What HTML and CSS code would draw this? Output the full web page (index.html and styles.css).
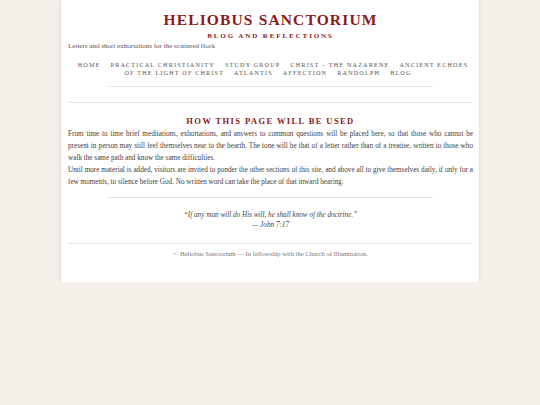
FILE: index.html
```html
<!DOCTYPE html>
<html>
<head>
<meta charset="utf-8">
<link rel="stylesheet" href="styles.css">
</head>
<body>
<div class="page">
  <header class="header">
    <h1 class="title">HELIOBUS SANCTORIUM</h1>
    <div class="subtitle">BLOG AND REFLECTIONS</div>
    <div class="tagline">Letters and short exhortations for the scattered flock</div>
    <nav class="nav">
      <a>HOME</a><a>PRACTICAL CHRISTIANITY</a><a>STUDY GROUP</a><a>CHRIST – THE NAZARENE</a><a><span>ANCIENT ECHOES</span> <span>OF THE LIGHT OF CHRIST</span></a><a>ATLANTIS</a><a>AFFECTION</a><a>RANDOLPH</a><a>BLOG</a>
    </nav>
    <hr class="rule-short rule-top">
  </header>
  <hr class="rule-full rule-main">
  <main class="content">
    <h2 class="heading">HOW THIS PAGE WILL BE USED</h2>
    <p class="para">From time to time brief meditations, exhortations, and answers to common questions will be placed here, so that those who cannot be present in person may still feel themselves near to the hearth. The tone will be that of a letter rather than of a treatise, written to those who walk the same path and know the same difficulties.</p>
    <p class="para">Until more material is added, visitors are invited to ponder the other sections of this site, and above all to give themselves daily, if only for a few moments, to silence before God. No written word can take the place of that inward hearing.</p>
    <hr class="rule-short rule-quote">
    <blockquote class="quote">“If any man will do His will, he shall know of the doctrine.”<br>— John 7:17</blockquote>
  </main>
  <hr class="rule-full rule-foot">
  <footer class="footer">© Heliobus Sanctorium — In fellowship with the Church of Illumination.</footer>
</div>
</body>
</html>
```
FILE: styles.css
```css
html, body {
  margin: 0;
  padding: 0;
}
body {
  background: #f3f0e9;
  font-family: "Liberation Serif", "DejaVu Serif", serif;
  color: #3d3d3d;
}
.page {
  width: 418px;
  box-sizing: border-box;
  margin: 0 auto;
  background: #fff;
  padding: 11px 6px 23px 7px;
  box-shadow: 0 0 3px rgba(120, 110, 90, 0.25);
}
.header {
  text-align: center;
}
.title {
  margin: 0;
  font-size: 15.5px;
  line-height: 18px;
  font-weight: bold;
  letter-spacing: 1.15px;
  color: #8b1a1a;
}
.subtitle {
  margin-top: 2px;
  font-size: 7px;
  line-height: 10px;
  font-weight: bold;
  letter-spacing: 1.9px;
  color: #8b1a1a;
}
.tagline {
  text-align: left;
  font-size: 7.05px;
  line-height: 10px;
  color: #555;
}
.nav {
  margin-top: 9.75px;
  font-size: 6.2px;
  line-height: 8.5px;
  letter-spacing: 1.15px;
  color: #555;
}
.nav a {
  display: inline;
  margin: 0 5px;
}
hr {
  border: 0;
  border-top: 1px solid #e4e2dd;
  margin: 0;
  height: 0;
}
.rule-short {
  width: 80%;
  margin-left: auto;
  margin-right: auto;
}
.rule-top {
  margin-top: 8.5px;
}
.rule-main {
  margin-top: 15px;
}
.heading {
  margin: 12px 0 2px;
  text-align: center;
  font-size: 8.5px;
  line-height: 12px;
  letter-spacing: 1.4px;
  font-weight: bold;
  color: #8b1a1a;
}
.para {
  margin: 0 0 1px;
  font-size: 7.2px;
  line-height: 11.7px;
  text-align: justify;
  color: #3d3d3d;
}
.rule-quote {
  margin-top: 8.5px;
}
.quote {
  margin: 12px 0 0;
  text-align: center;
  font-style: italic;
  font-size: 7.2px;
  line-height: 10px;
  color: #444;
}
.rule-foot {
  margin-top: 13px;
}
.footer {
  margin-top: 5px;
  text-align: center;
  font-size: 6.6px;
  line-height: 10px;
  color: #777;
}
```
